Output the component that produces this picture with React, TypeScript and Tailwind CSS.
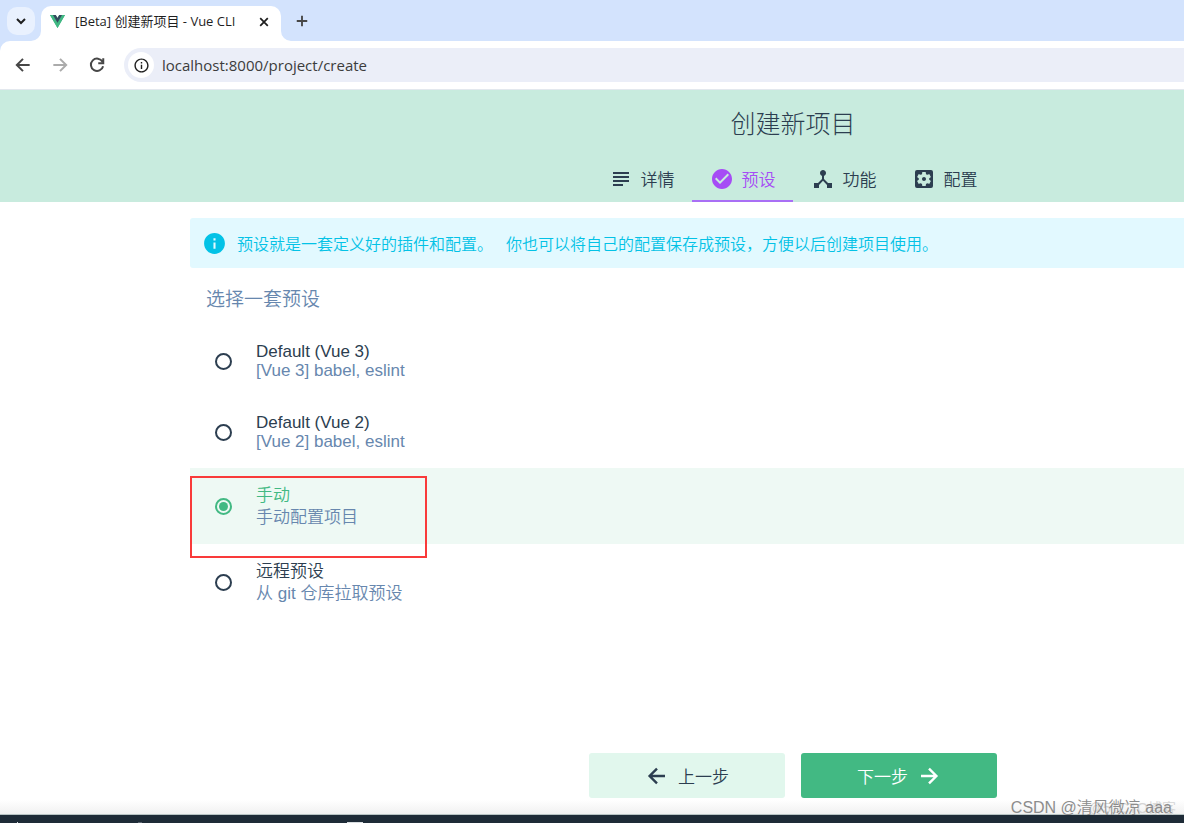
import { useState } from "react";
import {
  MdCheckCircle,
  MdDeviceHub,
  MdInfo,
  MdInfoOutline,
  MdSettingsApplications,
  MdSubject,
} from "react-icons/md";

const tabs = [
  { label: "详情", Icon: MdSubject },
  { label: "预设", Icon: MdCheckCircle },
  { label: "功能", Icon: MdDeviceHub },
  { label: "配置", Icon: MdSettingsApplications },
];

const latinRow = { row: "min-h-[71px] leading-[19px]", text: "pb-[2px]" };
const cjkRow = { row: "min-h-[76px] leading-[22px]", text: "pt-[2px]" };

const presets = [
  { id: "vue3", name: "Default (Vue 3)", info: "[Vue 3] babel, eslint", ...latinRow },
  { id: "vue2", name: "Default (Vue 2)", info: "[Vue 2] babel, eslint", ...latinRow },
  { id: "manual", name: "手动", info: "手动配置项目", ...cjkRow },
  { id: "remote", name: "远程预设", info: "从 git 仓库拉取预设", ...cjkRow },
];

const strokes = {
  back: "M20 12H5M12 4.6 4.6 12l7.4 7.4",
  forward: "M4 12h15M12 4.6l7.4 7.4-7.4 7.4",
  close: "M5.5 5.5l13 13M18.5 5.5l-13 13",
  plus: "M12 5v14M5 12h14",
  chevron: "M6 9l6 6 6-6",
  reload: "M18.6 8.2A7.4 7.4 0 1 0 19.3 13.4M19.5 4v6h-6",
};

function Line({ name, className }: { name: keyof typeof strokes; className: string }) {
  return (
    <svg viewBox="0 0 24 24" fill="none" stroke="currentColor" className={className} aria-hidden="true">
      <path d={strokes[name]} />
    </svg>
  );
}

function VueLogo() {
  return (
    <svg viewBox="0 0 256 221" className="h-[13px] w-[15px] shrink-0" aria-hidden="true">
      <path fill="#41b883" d="M204.8 0H256L128 220.8 0 0h97.92L128 51.2 157.44 0h47.36Z" />
      <path fill="#41b883" d="m0 0 128 220.8L256 0h-51.2L128 132.48 50.56 0H0Z" />
      <path fill="#35495e" d="M50.56 0 128 133.12 204.8 0h-47.36L128 51.2 97.92 0H50.56Z" />
    </svg>
  );
}

function Browser() {
  return (
    <div className="bg-[#d3e3fd] font-['Open_Sans','Noto_Sans_CJK_SC',sans-serif] font-normal text-[#1f1f1f]">
      <div className="flex h-[41px] items-end">
        <div className="flex h-[41px] w-[41px] items-center justify-center">
          <button aria-label="搜索标签页" className="flex size-7 items-center justify-center rounded-[10px] bg-[#e9f1fe]">
            <Line name="chevron" className="size-4 stroke-3" />
          </button>
        </div>
        <div className="relative flex h-[35px] w-60 items-center rounded-t-[10px] bg-white pr-2 pb-1 pl-[9px]">
          <svg viewBox="0 0 10 10" className="absolute bottom-0 -left-[10px] size-[10px]" aria-hidden="true">
            <path fill="#fff" d="M10 0v10H0A10 10 0 0 0 10 0Z" />
          </svg>
          <svg viewBox="0 0 10 10" className="absolute -right-[10px] bottom-0 size-[10px]" aria-hidden="true">
            <path fill="#fff" d="M0 0v10h10A10 10 0 0 1 0 0Z" />
          </svg>
          <VueLogo />
          <span className="ml-[10px] flex-1 text-[13px] whitespace-nowrap">[Beta] 创建新项目 - Vue CLI</span>
          <button aria-label="关闭" className="flex size-[18px] items-center justify-center">
            <Line name="close" className="size-[14px] stroke-3" />
          </button>
        </div>
        <button aria-label="新标签页" className="flex h-[41px] w-[41px] items-center justify-center text-[#474747]">
          <Line name="plus" className="size-[18px] stroke-[2.5]" />
        </button>
      </div>
      <div className="flex h-[49px] items-center rounded-tl-[10px] border-b border-[#e3e8ee] bg-white pl-[13px]">
        <button aria-label="后退" className="mr-[17px] text-[#474747]">
          <Line name="back" className="size-5 stroke-[2.4]" />
        </button>
        <button aria-label="前进" className="mr-[17px] text-[#ababab]">
          <Line name="forward" className="size-5 stroke-[2.4]" />
        </button>
        <button aria-label="重新加载" className="mr-[17px] text-[#474747]">
          <Line name="reload" className="size-5 stroke-[2.4]" />
        </button>
        <div className="flex h-[34px] flex-1 items-center rounded-l-full bg-[#ebeef8] pl-1">
          <span className="flex size-[26px] items-center justify-center rounded-full bg-white">
            <MdInfoOutline className="size-[17px]" />
          </span>
          <div className="ml-2 flex-1">
            <input
              aria-label="地址"
              defaultValue="localhost:8000/project/create"
              className="w-full bg-transparent text-[15px] text-[#3c3c3c] outline-none"
            />
          </div>
        </div>
      </div>
    </div>
  );
}

export default function App() {
  const [selected, setSelected] = useState("manual");
  return (
    <div className="flex min-h-screen flex-col overflow-x-hidden bg-white font-['Liberation_Sans','Noto_Sans_CJK_SC',sans-serif] text-[17px] font-[350] text-[#2c3e50]">
      <Browser />
      <header className="flex flex-col items-center bg-[#c8ebde] pl-[402px]">
        <h1 className="pt-4 pb-4 text-[25px] leading-9 font-light">创建新项目</h1>
        <nav className="flex font-['Noto_Sans_CJK_SC',sans-serif]">
          {tabs.map(({ label, Icon }, i) => (
            <a
              key={label}
              href="#"
              className={
                i === 1
                  ? "flex h-11 w-[101px] items-center justify-center gap-2 border-b-2 border-[#a96ff5] text-[#a64cf5]"
                  : "flex h-11 w-[101px] items-center justify-center gap-2 border-b-2 border-transparent"
              }
            >
              <Icon className="size-6" />
              {label}
            </a>
          ))}
        </nav>
      </header>

      <main className="flex flex-1 flex-col pt-4 pl-[190px]">
        <p className="flex h-[50px] items-center gap-[13px] rounded-l-[3px] bg-[#e2f9ff] pl-3 font-['Noto_Sans_CJK_SC',sans-serif] text-base whitespace-nowrap text-[#03c2e6]">
          <span className="flex items-center gap-[10px]">
            <MdInfo className="size-[25px]" />
            预设就是一套定义好的插件和配置。
          </span>
          <span>你也可以将自己的配置保存成预设，方便以后创建项目使用。</span>
        </p>
        <h2 className="px-4 pt-4 pb-[14px] font-['Noto_Sans_CJK_SC',sans-serif] text-[19px] leading-7 text-[#6787ae]">
          选择一套预设
        </h2>
        <div role="radiogroup" aria-label="选择一套预设">
          {presets.map((p) => {
            const on = p.id === selected;
            return (
              <label key={p.id} className={`relative flex items-center gap-6 pl-[25px] ${p.row} ${on ? "bg-[#eef9f4]" : ""}`}>
                <input
                  type="radio"
                  name="preset"
                  checked={on}
                  onChange={() => setSelected(p.id)}
                  className="size-[17px] appearance-none rounded-full border-2 border-[#2c3e50] bg-clip-content p-[2px] checked:border-[#42b983] checked:bg-[#42b983]"
                />
                <span className={`flex flex-col ${p.text}`}>
                  <span className={on ? "text-[#42b983]" : ""}>{p.name}</span>
                  <span className="text-[#6787ae]">{p.info}</span>
                </span>
                {p.id === "manual" && (
                  <span className="pointer-events-none absolute top-2 left-0 z-10 h-[82px] w-[237px] border-2 border-[#f93a3a]" />
                )}
              </label>
            );
          })}
        </div>
      </main>

      <footer className="flex justify-center gap-4 bg-linear-to-t from-[#f1f1f1] to-white to-[14px] pb-4 pl-[402px] font-['Noto_Sans_CJK_SC',sans-serif]">
        <button className="flex h-[45px] w-[196px] items-center justify-center gap-[9px] rounded-[3px] bg-[#e1f7ed]">
          <Line name="back" className="size-6 stroke-[2.4]" />
          上一步
        </button>
        <button className="flex h-[45px] w-[196px] items-center justify-center gap-[9px] rounded-[3px] bg-[#42b983] text-white">
          下一步
          <Line name="forward" className="size-6 stroke-[2.4]" />
        </button>
      </footer>
      <div className="relative h-[9px] border-t border-[#b8c4c4] bg-[#1e2b37]">
        <span className="absolute bottom-0 left-[347px] h-px w-4 bg-[#d8dde0]" />
        <span className="absolute bottom-0 left-[138px] h-px w-1 bg-[#5b6570]" />
        <span className="absolute bottom-0 left-[17px] h-px w-px bg-[#d8dde0]" />
        <span className="absolute right-2 bottom-[5px] text-[14px] leading-5 text-[#d5d5d5]">@51CTO博客</span>
        <span className="absolute right-3 bottom-[5px] text-[16px] leading-5 whitespace-nowrap text-[#8c8c8c]">
          CSDN @清风微凉 aaa
        </span>
      </div>
    </div>
  );
}
